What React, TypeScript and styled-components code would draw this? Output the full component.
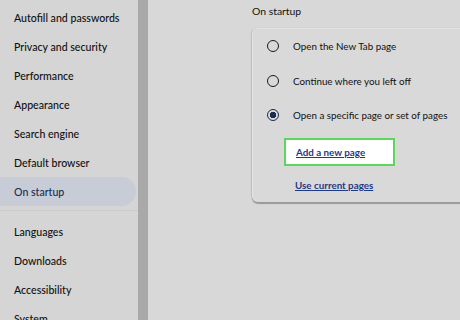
import { createGlobalStyle, styled } from "styled-components";

const GlobalStyle = createGlobalStyle`
  html, body {
    margin: 0;
    padding: 0;
    background: #d8d8d8;
    font-family: Lato, "Noto Sans", sans-serif;
    overflow: hidden;
  }
`;

const navTop = [
  "Autofill and passwords",
  "Privacy and security",
  "Performance",
  "Appearance",
  "Search engine",
  "Default browser",
];
const navBottom = ["Languages", "Downloads", "Accessibility", "System"];

const options = [
  { label: "Open the New Tab page", checked: false },
  { label: "Continue where you left off", checked: false },
  { label: "Open a specific page or set of pages", checked: true },
];

const App = () => {
  return (
    <Page>
      <GlobalStyle />
      <Sidebar>
        {navTop.map((n) => (
          <NavItem key={n}>{n}</NavItem>
        ))}
        <NavItem $active>On startup</NavItem>
        <Separator />
        {navBottom.map((n) => (
          <NavItem key={n}>{n}</NavItem>
        ))}
      </Sidebar>
      <Divider />
      <Main>
        <Heading>On startup</Heading>
        <Card>
          {options.map((o) => (
            <Option key={o.label}>
              <Radio $checked={o.checked} />
              <span>{o.label}</span>
            </Option>
          ))}
          <Links>
            <Highlight>
              <Link>Add a new page</Link>
            </Highlight>
            <Link $indent>Use current pages</Link>
          </Links>
        </Card>
      </Main>
    </Page>
  );
};

export default App;

const Page = styled.div`
  width: 460px;
  height: 320px;
  display: flex;
  overflow: hidden;
`;

const Sidebar = styled.div`
  width: 138px;
  flex-shrink: 0;
  background: #d5d5d5;
  padding-top: 3px;
  display: flex;
  flex-direction: column;
`;

const NavItem = styled.div<{ $active?: boolean }>`
  height: 29px;
  flex-shrink: 0;
  display: flex;
  align-items: center;
  padding-left: 14px;
  margin-right: 2px;
  font-size: 10.6px;
  font-weight: 500;
  white-space: nowrap;
  color: ${(p) => (p.$active ? "#1c2b52" : "#111111")};
  background: ${(p) => (p.$active ? "#c8ccd6" : "transparent")};
  border-radius: 0 15px 15px 0;
`;

const Separator = styled.div`
  height: 1px;
  flex-shrink: 0;
  background: #cbcbcb;
  margin: 4px 0 6px;
`;

const Divider = styled.div`
  width: 10px;
  flex-shrink: 0;
  background: #a9a9a9;
`;

const Main = styled.div`
  flex: 1;
  min-width: 0;
  padding-left: 104px;
  background: #d8d8d8;
`;

const Heading = styled.div`
  font-size: 10.4px;
  color: #111111;
  height: 22px;
  display: flex;
  align-items: center;
`;

const Card = styled.div`
  margin-top: 6px;
  width: 240px;
  padding: 0 0 11px 0;
  background: #d9d9d9;
  border-radius: 6px 0 0 6px;
  border-left: 1px solid #e4e4e4;
  border-top: 1px solid #e2e2e2;
  box-shadow: 0 1.5px 1px #9a9a9a, -1px 0 1px #c4c4c4;
`;

const Option = styled.div`
  height: 34.5px;
  display: flex;
  align-items: center;
  padding-left: 14px;
  gap: 14px;
  font-size: 9.8px;
  color: #111111;
  white-space: nowrap;
`;

const Radio = styled.div<{ $checked: boolean }>`
  width: 10px;
  height: 10px;
  flex-shrink: 0;
  border-radius: 50%;
  border: 1.5px solid ${(p) => (p.$checked ? "#1c2b52" : "#1a1a1a")};
  background: ${(p) =>
    p.$checked ? "radial-gradient(circle, #1c2b52 0 3px, transparent 3.5px)" : "transparent"};
`;

const Links = styled.div`
  display: flex;
  flex-direction: column;
  align-items: flex-start;
  padding-left: 31px;
  margin-top: 5px;
`;

const Highlight = styled.div`
  width: 97px;
  height: 24px;
  border: 2px solid #5cd65c;
  background: #ffffff;
  display: flex;
  align-items: center;
  padding-left: 10px;
  margin-bottom: 13px;
`;

const Link = styled.a<{ $indent?: boolean }>`
  font-size: 9.8px;
  font-weight: 700;
  color: #1f3a85;
  text-decoration: underline;
  white-space: nowrap;
  padding-left: ${(p) => (p.$indent ? "11px" : "0")};
`;
